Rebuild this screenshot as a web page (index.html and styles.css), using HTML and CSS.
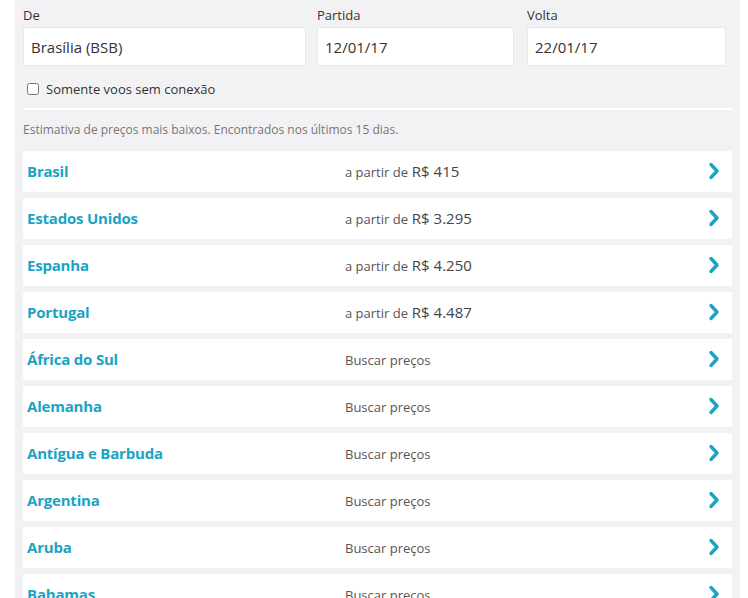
FILE: index.html
```html
<!DOCTYPE html>
<html lang="pt-BR">
<head>
  <meta charset="UTF-8">
  <meta name="viewport" content="width=device-width, initial-scale=1.0">
  <title>Voos baratos</title>
  <link rel="stylesheet" href="styles.css">
</head>
<body>
  <div class="panel">
    <!-- Search form -->
    <div class="search-fields">
      <div class="field">
        <label for="from">De</label>
        <input type="text" id="from" value="Brasília (BSB)">
      </div>
      <div class="field">
        <label for="depart">Partida</label>
        <input type="text" id="depart" value="12/01/17">
      </div>
      <div class="field">
        <label for="return">Volta</label>
        <input type="text" id="return" value="22/01/17">
      </div>
    </div>

    <label class="direct-only">
      <input type="checkbox">
      <span>Somente voos sem conexão</span>
    </label>

    <p class="hint">Estimativa de preços mais baixos. Encontrados nos últimos 15 dias.</p>

    <!-- Destinations -->
    <ul class="destinations">
      <li class="dest-row"><span class="country">Brasil</span><span class="price"><small>a partir de</small> R$ 415</span><svg class="chevron" viewBox="0 0 12 18"><path d="M3 2.5l6 6.5-6 6.5"/></svg></li>
      <li class="dest-row"><span class="country">Estados Unidos</span><span class="price"><small>a partir de</small> R$ 3.295</span><svg class="chevron" viewBox="0 0 12 18"><path d="M3 2.5l6 6.5-6 6.5"/></svg></li>
      <li class="dest-row"><span class="country">Espanha</span><span class="price"><small>a partir de</small> R$ 4.250</span><svg class="chevron" viewBox="0 0 12 18"><path d="M3 2.5l6 6.5-6 6.5"/></svg></li>
      <li class="dest-row"><span class="country">Portugal</span><span class="price"><small>a partir de</small> R$ 4.487</span><svg class="chevron" viewBox="0 0 12 18"><path d="M3 2.5l6 6.5-6 6.5"/></svg></li>
      <li class="dest-row"><span class="country">África do Sul</span><span class="price"><small>Buscar preços</small></span><svg class="chevron" viewBox="0 0 12 18"><path d="M3 2.5l6 6.5-6 6.5"/></svg></li>
      <li class="dest-row"><span class="country">Alemanha</span><span class="price"><small>Buscar preços</small></span><svg class="chevron" viewBox="0 0 12 18"><path d="M3 2.5l6 6.5-6 6.5"/></svg></li>
      <li class="dest-row"><span class="country">Antígua e Barbuda</span><span class="price"><small>Buscar preços</small></span><svg class="chevron" viewBox="0 0 12 18"><path d="M3 2.5l6 6.5-6 6.5"/></svg></li>
      <li class="dest-row"><span class="country">Argentina</span><span class="price"><small>Buscar preços</small></span><svg class="chevron" viewBox="0 0 12 18"><path d="M3 2.5l6 6.5-6 6.5"/></svg></li>
      <li class="dest-row"><span class="country">Aruba</span><span class="price"><small>Buscar preços</small></span><svg class="chevron" viewBox="0 0 12 18"><path d="M3 2.5l6 6.5-6 6.5"/></svg></li>
      <li class="dest-row"><span class="country">Bahamas</span><span class="price"><small>Buscar preços</small></span><svg class="chevron" viewBox="0 0 12 18"><path d="M3 2.5l6 6.5-6 6.5"/></svg></li>
    </ul>
  </div>
</body>
</html>
```

FILE: styles.css
```css
/* Global styles */
* {
  margin: 0;
  padding: 0;
  box-sizing: border-box;
}

body {
  font-family: 'Open Sans', 'DejaVu Sans', sans-serif;
  background-color: #fff;
  color: #333;
  overflow: hidden;
}

.panel {
  margin-left: 15px;
  width: 725px;
  min-height: 100vh;
  padding: 6px 8px 0;
  background-color: #f2f2f4;
}

/* Search form */
.search-fields {
  display: grid;
  grid-template-columns: 283px 197px 197px;
  column-gap: 11px;
}

.search-fields .field:last-child {
  margin-left: 2px;
}

.field label {
  display: block;
  font-size: 13px;
  line-height: 18px;
  color: #333;
  margin-bottom: 3px;
}

.field input {
  width: 100%;
  height: 39px;
  padding: 0 7px;
  border: 1px solid #e8e8ea;
  border-radius: 2px;
  background-color: #fff;
  font-family: inherit;
  font-size: 15px;
  color: #333;
  outline: none;
}

.search-fields .field:last-child input {
  width: 199px;
}

.direct-only {
  display: flex;
  align-items: center;
  gap: 7px;
  margin: 14px 0 0 4px;
  font-size: 13px;
  line-height: 18px;
  color: #333;
}

.direct-only input {
  width: 12px;
  height: 12px;
  margin: 0;
}

.hint {
  margin-top: 10px;
  padding-top: 12px;
  border-top: 2px solid #fff;
  font-size: 12px;
  line-height: 16px;
  color: #777;
  width: 710px;
}

/* Destination list */
.destinations {
  list-style: none;
  margin-top: 13px;
  width: 709px;
}

.dest-row {
  display: grid;
  grid-template-columns: 318px 1fr auto;
  align-items: center;
  height: 41px;
  margin-bottom: 6px;
  padding: 0 12px 2px 4px;
  background-color: #fff;
}

.country {
  font-size: 15px;
  font-weight: 700;
  letter-spacing: -0.2px;
  color: #1aa3c3;
}

.price {
  font-size: 15px;
  color: #444;
}

.price small {
  font-size: 13px;
  color: #555;
}

.chevron {
  width: 12px;
  height: 18px;
  fill: none;
  stroke: #1aa3c3;
  stroke-width: 3.4;
  stroke-linecap: round;
  stroke-linejoin: round;
}
```
